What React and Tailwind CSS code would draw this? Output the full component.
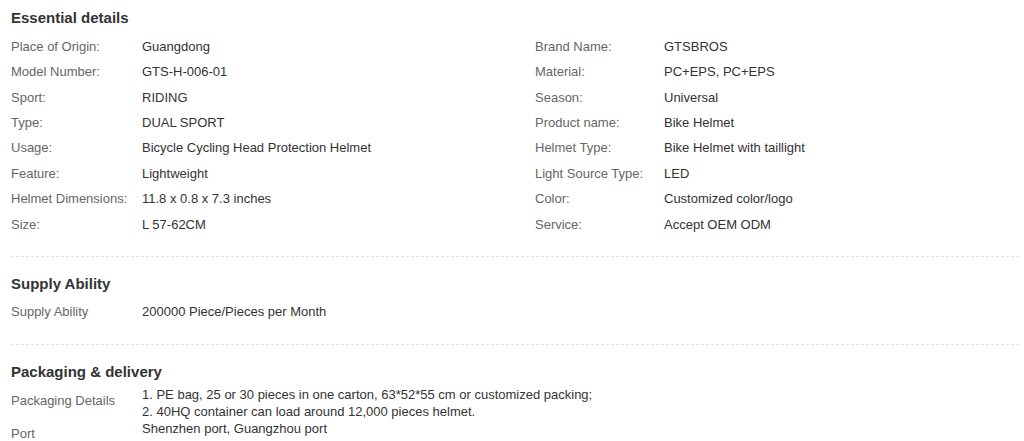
import React from "react";

const left = [
  ["Place of Origin:", "Guangdong"],
  ["Model Number:", "GTS-H-006-01"],
  ["Sport:", "RIDING"],
  ["Type:", "DUAL SPORT"],
  ["Usage:", "Bicycle Cycling Head Protection Helmet"],
  ["Feature:", "Lightweight"],
  ["Helmet Dimensions:", "11.8 x 0.8 x 7.3 inches"],
  ["Size:", "L 57-62CM"],
];
const right = [
  ["Brand Name:", "GTSBROS"],
  ["Material:", "PC+EPS, PC+EPS"],
  ["Season:", "Universal"],
  ["Product name:", "Bike Helmet"],
  ["Helmet Type:", "Bike Helmet with taillight"],
  ["Light Source Type:", "LED"],
  ["Color:", "Customized color/logo"],
  ["Service:", "Accept OEM ODM"],
];

function Row({ label, value, lw }) {
  return (
    <div className="flex h-[25.43px] items-center whitespace-nowrap">
      <div className={`${lw} shrink-0 text-[#666]`}>{label}</div>
      <div className="text-[#333]">{value}</div>
    </div>
  );
}

export default function App() {
  return (
    <div
      className="bg-white w-[1024px] h-[441px] overflow-hidden text-[13px]"
      style={{ fontFamily: '"Liberation Sans", Arial, sans-serif' }}
    >
      <div className="ml-[11px] w-[1008px] pt-[8px]">
        <section className="pb-[19px]">
          <h2 className="text-[15px] font-bold leading-[20px] text-[#333] mb-[5.8px]">
            Essential details
          </h2>
          <div className="flex">
            <div className="w-[524px] shrink-0">
              {left.map(([l, v]) => (
                <Row key={l} label={l} value={v} lw="w-[131px]" />
              ))}
            </div>
            <div className="flex-1">
              {right.map(([l, v]) => (
                <Row key={l} label={l} value={v} lw="w-[129px]" />
              ))}
            </div>
          </div>
        </section>
        <div className="border-t border-dashed border-[#e3e3e3]" />
        <section className="pt-[17px] pb-[19px]">
          <h2 className="text-[15px] font-bold leading-[20px] text-[#333] mb-[5px]">
            Supply Ability
          </h2>
          <Row label="Supply Ability" value="200000 Piece/Pieces per Month" lw="w-[131px]" />
        </section>
        <div className="border-t border-dashed border-[#e3e3e3]" />
        <section className="pt-[17px]">
          <h2 className="text-[15px] font-bold leading-[20px] text-[#333] mb-[4.5px]">
            Packaging &amp; delivery
          </h2>
          <div className="flex leading-[17px]">
            <div className="w-[131px] shrink-0 pt-[5.5px] text-[#666]">Packaging Details</div>
            <div className="text-[#333]">
              <div>1. PE bag, 25 or 30 pieces in one carton, 63*52*55 cm or customized packing;</div>
              <div>2. 40HQ container can load around 12,000 pieces helmet.</div>
            </div>
          </div>
          <div className="flex leading-[17px]">
            <div className="w-[131px] shrink-0 pt-[4.5px] text-[#666]">Port</div>
            <div className="text-[#333]">Shenzhen port, Guangzhou port</div>
          </div>
        </section>
      </div>
    </div>
  );
}
